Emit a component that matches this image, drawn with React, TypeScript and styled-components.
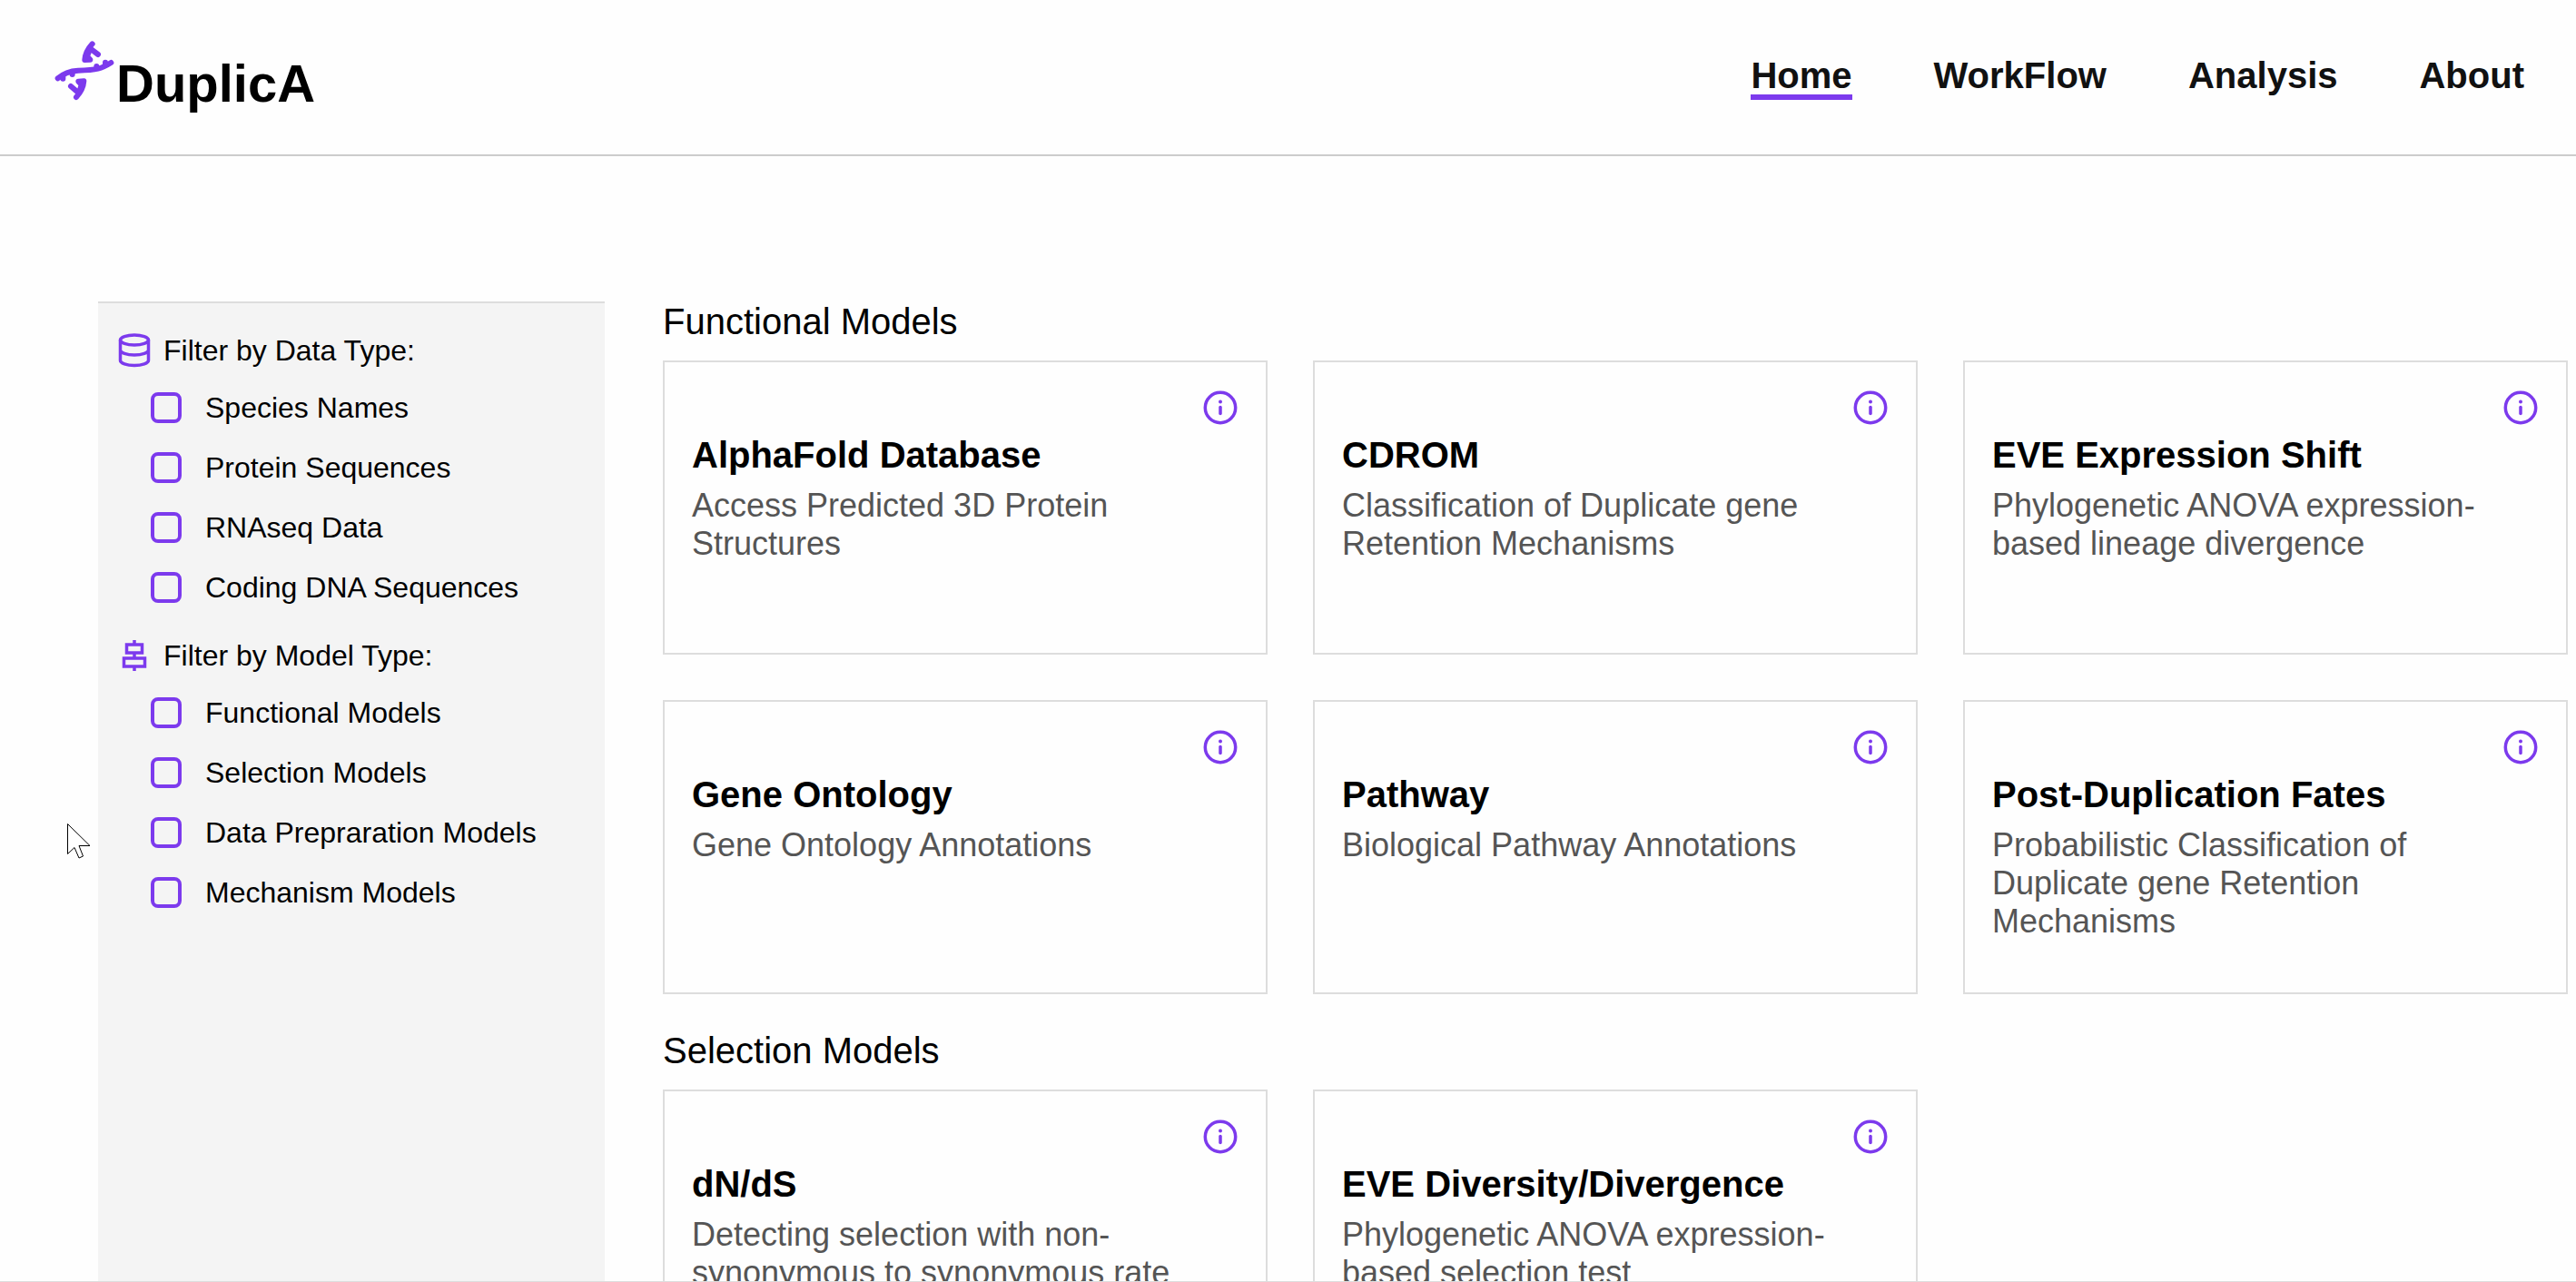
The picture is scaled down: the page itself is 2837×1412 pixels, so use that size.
import React from "react";
import styled, { createGlobalStyle } from "styled-components";

const purple = "#7c3aed";
const line = "#dddddd";

const GlobalStyle = createGlobalStyle`
  *, *::before, *::after { box-sizing: border-box; }
  body {
    margin: 0;
    background: #fefefe;
    color: #000;
    font-family: Arial, "Liberation Sans", sans-serif;
  }
  h1, h2, h3, p { margin: 0; font: inherit; }
`;

const Page = styled.div`
  height: 100vh;
  display: flex;
  flex-direction: column;
  overflow: hidden;
  border-bottom: 1px solid ${line};
`;

const Header = styled.header`
  flex: none;
  display: flex;
  justify-content: space-between;
  align-items: flex-start;
  padding: 44px 57px 46px 60px;
  border-bottom: 2px solid #cccccc;
`;

const Brand = styled.a`
  display: flex;
  align-items: flex-start;
  color: #000;
  text-decoration: none;
`;

const BrandName = styled.span`
  padding-top: 16px;
  font-size: 58px;
  line-height: 64px;
  font-weight: 700;
`;

const Nav = styled.nav`
  display: flex;
  gap: 90px;
  padding-top: 18px;
`;

const NavLink = styled.a<{ $active?: boolean }>`
  border-bottom: 6px solid ${(p) => (p.$active ? purple : "transparent")};
  color: #111;
  font-size: 40px;
  line-height: 42px;
  font-weight: 700;
  text-decoration: none;
`;

const Body = styled.div`
  flex: 1;
  min-height: 0;
  display: flex;
  gap: 64px;
  padding: 160px 9px 0 108px;
`;

const Sidebar = styled.aside`
  flex: none;
  width: 558px;
  display: flex;
  flex-direction: column;
  gap: 20px;
  padding: 30px 22px;
  border-top: 2px solid ${line};
  background: #f4f4f4;
`;

const FilterGroup = styled.fieldset`
  margin: 0;
  padding: 0;
  border: 0;
  min-width: 0;
`;

const FilterTitle = styled.legend`
  display: flex;
  align-items: center;
  gap: 14px;
  height: 44px;
  padding: 0;
  font-size: 32px;
  line-height: 44px;
`;

const Option = styled.label`
  display: flex;
  align-items: center;
  gap: 26px;
  height: 66px;
  padding: 0 0 0 36px;
  font-size: 32px;
  line-height: 44px;
`;

const OptionList = styled.div`
  display: flex;
  flex-direction: column;
  padding-top: 8px;
`;

const Checkbox = styled.input`
  appearance: none;
  flex: none;
  width: 34px;
  height: 34px;
  margin: 0;
  border: 4px solid ${purple};
  border-radius: 8px;
  background: transparent;
  &:checked { background: ${purple}; }
`;

const Content = styled.main`
  flex: 1;
  min-width: 0;
  display: flex;
  flex-direction: column;
  gap: 40px;
`;

const SectionTitle = styled.h2`
  font-size: 40px;
  line-height: 44px;
  padding-bottom: 21px;
`;

const CardGrid = styled.div`
  display: grid;
  grid-template-columns: repeat(3, minmax(0, 1fr));
  grid-auto-rows: minmax(324px, auto);
  gap: 50px;
`;

const Card = styled.article`
  display: flex;
  flex-direction: column;
  padding: 30px;
  border: 2px solid ${line};
`;

const InfoButton = styled.button`
  align-self: flex-end;
  display: flex;
  width: 40px;
  height: 40px;
  padding: 0;
  border: 0;
  background: none;
  color: ${purple};
`;

const CardTitle = styled.h3`
  padding-top: 9px;
  font-size: 40px;
  line-height: 46px;
  font-weight: 700;
`;

const CardText = styled.p`
  padding-top: 12px;
  color: #555;
  font-size: 36px;
  line-height: 42px;
`;

const Pointer = styled.svg`
  position: fixed;
  left: 73px;
  top: 906px;
  pointer-events: none;
`;

const Logo = () => (
  <svg width="68" height="68" viewBox="60 70 204 204" fill="none" stroke={purple} strokeWidth="18" strokeLinecap="round" strokeLinejoin="round" aria-hidden="true">
    <path d="M71 197Q98 173 138 171C200 170 215 165 247 145" />
    <path d="M88 198v-6M119 184v-6M228 144v6M199 157v6" />
    <path d="M185 83Q162 108 160 136L178 135L168 124L178 98L204 118" />
    <path d="M132 259Q155 234 157 206L139 207L149 218L141 246L114 223" />
  </svg>
);

const DatabaseIcon = () => (
  <svg width="36" height="40" viewBox="0 0 36 40" fill="none" stroke={purple} strokeWidth="3.500" aria-hidden="true">
    <ellipse cx="18" cy="8.500" rx="15.500" ry="5.500" />
    <path d="M2.500 8.500v22.500c0 3 7 5.500 15.500 5.500s15.500-2.500 15.500-5.500v-22.500M2.500 19.500c0 3 7 5.500 15.500 5.500s15.500-2.500 15.500-5.500" />
  </svg>
);

const ModelIcon = () => (
  <svg width="36" height="40" viewBox="0 0 36 40" fill="none" stroke={purple} strokeWidth="3.500" aria-hidden="true">
    <path d="M9.500 8h17v9h-17zM6.500 23h23v9h-23zM18 3v5M18 17v6M18 32v5" />
  </svg>
);

const InfoIcon = () => (
  <svg width="40" height="40" viewBox="0 0 40 40" fill="none" stroke="currentColor" strokeWidth="3.500" strokeLinecap="round" aria-hidden="true">
    <circle cx="20" cy="20" r="16.700" />
    <path d="M20 19.500v7" />
    <circle cx="20" cy="13.500" r="2" fill="currentColor" stroke="none" />
  </svg>
);

const navItems = ["Home", "WorkFlow", "Analysis", "About"];

const filters = [
  {
    title: "Filter by Data Type:",
    icon: <DatabaseIcon />,
    options: ["Species Names", "Protein Sequences", "RNAseq Data", "Coding DNA Sequences"],
  },
  {
    title: "Filter by Model Type:",
    icon: <ModelIcon />,
    options: ["Functional Models", "Selection Models", "Data Prepraration Models", "Mechanism Models"],
  },
];

const sections = [
  {
    title: "Functional Models",
    cards: [
      ["AlphaFold Database", "Access Predicted 3D Protein Structures"],
      ["CDROM", "Classification of Duplicate gene Retention Mechanisms"],
      ["EVE Expression Shift", "Phylogenetic ANOVA expression-based lineage divergence"],
      ["Gene Ontology", "Gene Ontology Annotations"],
      ["Pathway", "Biological Pathway Annotations"],
      ["Post-Duplication Fates", "Probabilistic Classification of Duplicate gene Retention Mechanisms"],
    ],
  },
  {
    title: "Selection Models",
    cards: [
      ["dN/dS", "Detecting selection with non-synonymous to synonymous rate"],
      ["EVE Diversity/Divergence", "Phylogenetic ANOVA expression-based selection test"],
    ],
  },
];

export default function App() {
  return (
    <Page>
      <GlobalStyle />
      <Header>
        <Brand href="#">
          <Logo />
          <BrandName>DuplicA</BrandName>
        </Brand>
        <Nav>
          {navItems.map((item, i) => (
            <NavLink key={item} href={"#" + item.toLowerCase()} $active={i === 0}>
              {item}
            </NavLink>
          ))}
        </Nav>
      </Header>
      <Body>
        <Sidebar>
          {filters.map((group) => (
            <FilterGroup key={group.title}>
              <FilterTitle>
                {group.icon}
                {group.title}
              </FilterTitle>
              <OptionList>
                {group.options.map((option) => (
                  <Option key={option}>
                    <Checkbox type="checkbox" />
                    {option}
                  </Option>
                ))}
              </OptionList>
            </FilterGroup>
          ))}
        </Sidebar>
        <Content>
          {sections.map((section) => (
            <section key={section.title}>
              <SectionTitle>{section.title}</SectionTitle>
              <CardGrid>
                {section.cards.map(([title, text]) => (
                  <Card key={title}>
                    <InfoButton type="button" aria-label={"About " + title}>
                      <InfoIcon />
                    </InfoButton>
                    <CardTitle>{title}</CardTitle>
                    <CardText>{text}</CardText>
                  </Card>
                ))}
              </CardGrid>
            </section>
          ))}
        </Content>
      </Body>
      <Pointer width="28" height="42" viewBox="0 0 28 42" fill="#fff" stroke="#000" strokeWidth="1" aria-hidden="true">
        <path d="M1.500 1.500V34.500L9 27.500L14 39L18.500 37L14 25.500H26Z" />
      </Pointer>
    </Page>
  );
}
